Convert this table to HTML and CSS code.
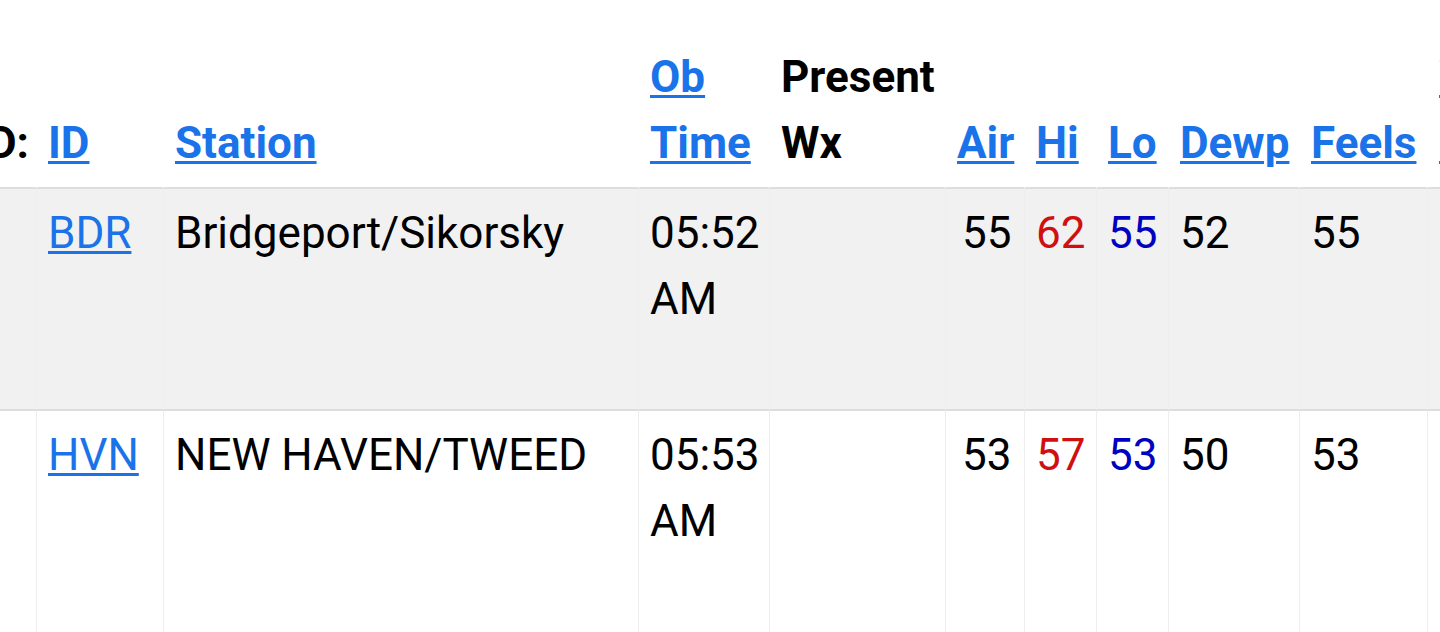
FILE: index.html
```html
<!DOCTYPE html>
<html lang="en">
<head>
<meta charset="utf-8">
<title>Observations</title>
<link rel="stylesheet" href="styles.css">
</head>
<body>
<div class="page">
  <table class="obs">
    <thead>
      <tr>
        <th class="c-lead">D:</th>
        <th class="c-id"><a href="#">ID</a></th>
        <th class="c-stn"><a href="#">Station</a></th>
        <th class="c-time"><a href="#">Ob Time</a></th>
        <th class="c-wx">Present Wx</th>
        <th class="c-air"><a href="#">Air</a></th>
        <th class="c-hi"><a href="#">Hi</a></th>
        <th class="c-lo"><a href="#">Lo</a></th>
        <th class="c-dewp"><a href="#">Dewp</a></th>
        <th class="c-feels"><a href="#">Feels</a></th>
        <th class="c-wind"><a href="#">Wind Chill</a></th>
        <th class="c-more"><a href="#">Wind</a></th>
      </tr>
    </thead>
    <tbody>
      <tr class="shade">
        <td></td>
        <td><a href="#">BDR</a></td>
        <td>Bridgeport/Sikorsky</td>
        <td>05:52 AM</td>
        <td></td>
        <td class="air">55</td>
        <td class="hi">62</td>
        <td class="lo">55</td>
        <td>52</td>
        <td>55</td>
        <td></td>
        <td>SW<br>8<br>mph</td>
      </tr>
      <tr>
        <td></td>
        <td><a href="#">HVN</a></td>
        <td>NEW HAVEN/TWEED</td>
        <td>05:53 AM</td>
        <td></td>
        <td class="air">53</td>
        <td class="hi">57</td>
        <td class="lo">53</td>
        <td>50</td>
        <td>53</td>
        <td></td>
        <td>S<br>6<br>mph<br>G 14</td>
      </tr>
    </tbody>
  </table>
</div>
</body>
</html>
```

FILE: styles.css
```css
html, body {
  margin: 0;
  padding: 0;
  overflow: hidden;
  background: #ffffff;
}

.page {
  width: 1440px;
  height: 632px;
  overflow: hidden;
  padding-top: 33px;
  box-sizing: border-box;
}

.obs {
  margin-left: -24px;
  border-collapse: separate;
  border-spacing: 0;
  table-layout: fixed;
  width: 1691px;
  font-family: Roboto, "Liberation Sans", Arial, sans-serif;
  font-size: 44px;
  line-height: 66px;
  color: #000000;
}

.obs th,
.obs td {
  box-sizing: border-box;
  padding: 11px;
  border-left: 1px solid transparent;
  text-align: left;
  white-space: normal;
}

.obs th {
  font-weight: 700;
  vertical-align: bottom;
  border-bottom: 2px solid #dddde0;
}

.obs td {
  font-weight: 400;
  vertical-align: top;
  border-left-color: #eeeef0;
  border-bottom: 2px solid #dddde0;
}

.obs a {
  color: #1a73e8;
  text-decoration: underline;
  text-decoration-thickness: 3px;
  text-underline-offset: 3px;
}

.shade td {
  background: #f1f1f2;
}

.obs td.air { padding-left: 16px; }
.hi { color: #d01010; }
.lo { color: #0000c0; }

.c-lead  { width: 60px; }
.c-id    { width: 127px; }
.c-stn   { width: 475px; }
.c-time  { width: 131px; }
.c-wx    { width: 176px; }
.c-air   { width: 79px; }
.c-hi    { width: 72px; }
.c-lo    { width: 72px; }
.c-dewp  { width: 131px; }
.c-feels { width: 128px; }
.c-wind  { width: 120px; }
.c-more  { width: 120px; }
```
